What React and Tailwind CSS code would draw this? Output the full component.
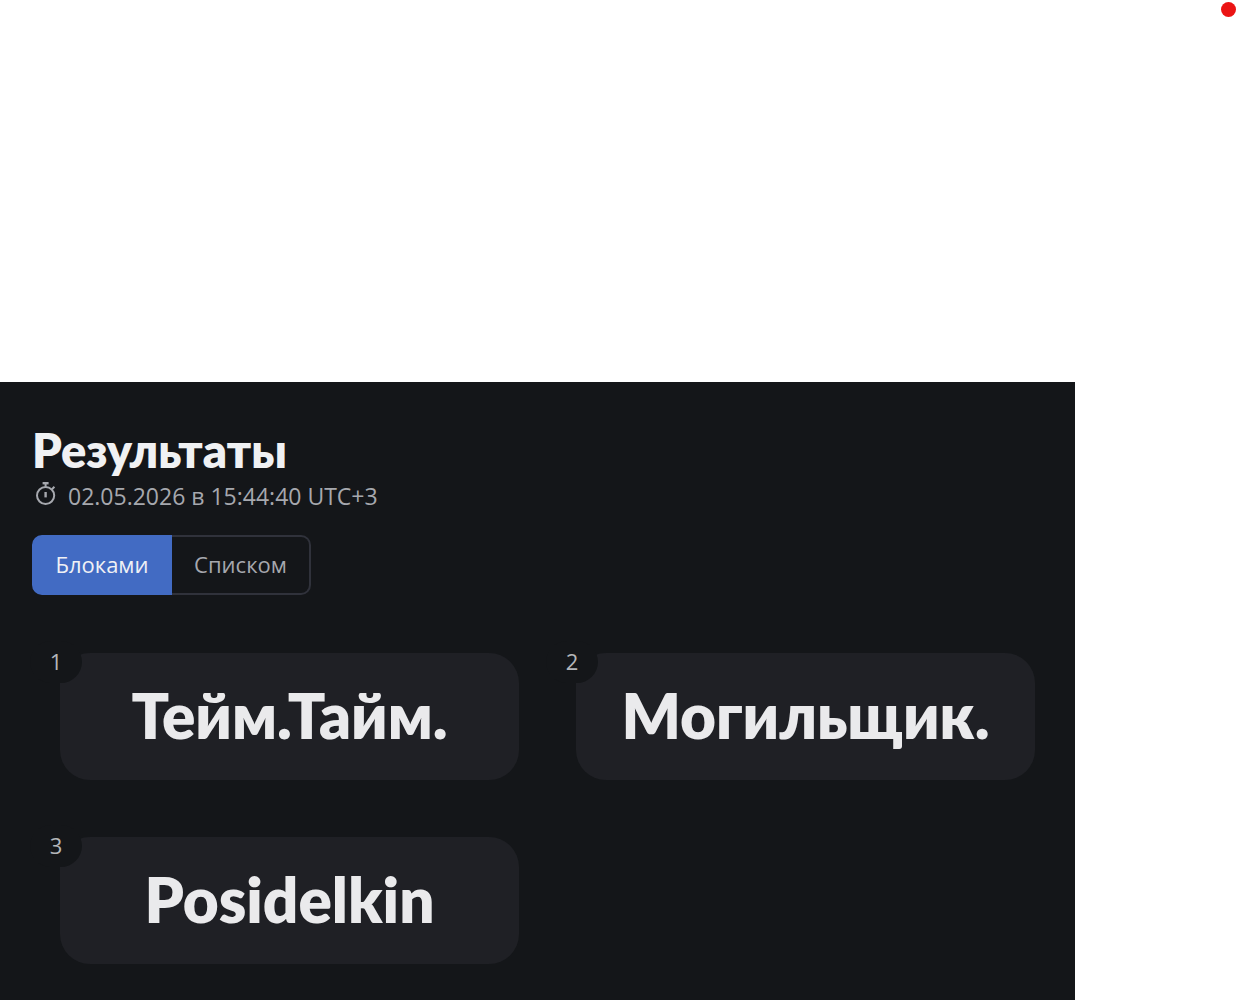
import { useState } from "react";

const results = ["Тейм.Тайм.", "Могильщик.", "Posidelkin"];

function StopwatchIcon() {
  return (
    <svg
      viewBox="0 0 24 26"
      className="mb-1.5 h-[26px] w-6 shrink-0"
      fill="none"
      stroke="currentColor"
      strokeWidth="2"
      aria-hidden="true"
    >
      <circle cx="11.6" cy="15.5" r="8.6" />
      <path d="M11.6 3.4v3.4M18 9.2l2.4-2.4" />
      <path d="M8.6 3.2h6" strokeWidth="2.4" />
      <path d="M11.6 12v5.4" strokeWidth="2.4" />
    </svg>
  );
}

function ResultCard({ place, name }) {
  return (
    <li className="relative flex h-[127px] items-center justify-center rounded-[30px] bg-[#1f2025] pb-1">
      <span className="absolute -top-3 -left-[30px] flex h-[42px] w-[52px] items-center justify-center rounded-[21px] bg-[#141619] pb-0.5 text-[22px] leading-10 text-[#b4b6ba]">
        {place}
      </span>
      <span className="font-['Lato','Open_Sans',sans-serif] text-[62px] leading-[62px] font-extrabold text-[#eaeaec]">
        {name}
      </span>
    </li>
  );
}

export default function App() {
  const [view, setView] = useState("blocks");
  const tab = "h-[60px] border-2 pb-0.5 text-[22px]";
  const on = "border-[#426bc3] bg-[#426bc3] text-[#f0f1f5]";
  const off = "border-[#30323b] text-[#a6a8ae]";

  return (
    <div className="min-h-screen bg-white font-['Open_Sans','Noto_Sans',sans-serif]">
      <div className="flex h-[382px] justify-end pt-0.5 pr-0.5">
        <span className="size-[15px] rounded-full bg-[#eb1414]" />
      </div>
      <main className="mr-[163px] min-h-[618px] bg-[#141619] pt-11 pr-10 pb-9 pl-8">
        <h1 className="font-['Lato','Open_Sans',sans-serif] text-[47px] leading-[48px] font-extrabold text-[#f0f1f3]">
          Результаты
        </h1>
        <p className="mt-2 flex h-7 items-center gap-2.5 pl-0.5 text-[23px] text-[#a6a8ae]">
          <StopwatchIcon />
          <span>02.05.2026 в 15:44:40 UTC+3</span>
        </p>
        <div className="mt-[25px] flex">
          <button
            type="button"
            aria-pressed={view === "blocks"}
            onClick={() => setView("blocks")}
            className={`${tab} w-[140px] rounded-l-[10px] ${view === "blocks" ? on : off}`}
          >
            Блоками
          </button>
          <button
            type="button"
            aria-pressed={view === "list"}
            onClick={() => setView("list")}
            className={`${tab} w-[139px] rounded-r-[10px] border-l-0 ${view === "list" ? on : off}`}
          >
            Списком
          </button>
        </div>
        <ol className="mt-[58px] ml-7 grid grid-cols-2 gap-[57px]">
          {results.map((name, i) => (
            <ResultCard key={name} place={i + 1} name={name} />
          ))}
        </ol>
      </main>
    </div>
  );
}
